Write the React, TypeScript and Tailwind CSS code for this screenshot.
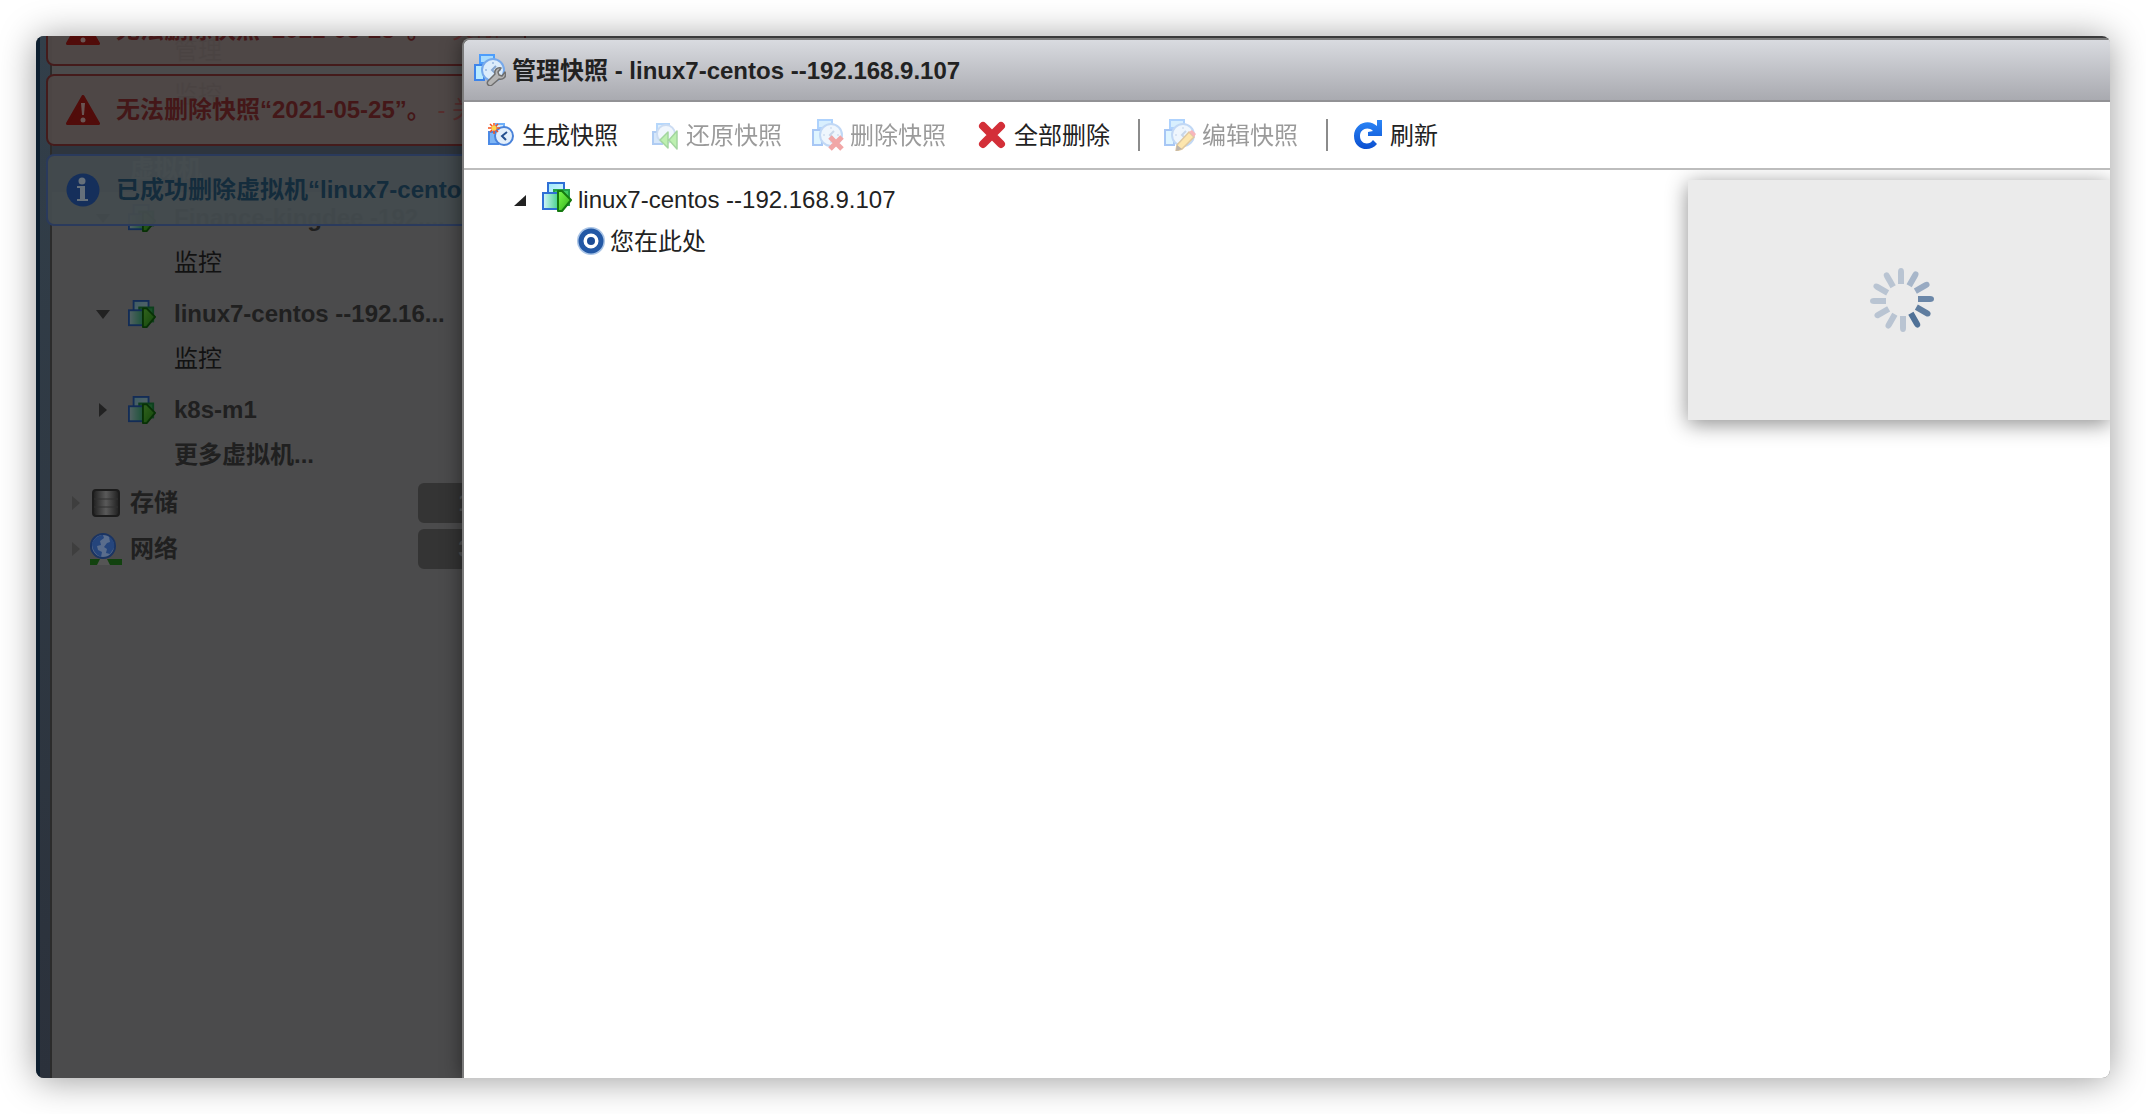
import type { ReactNode } from "react";

function VmIcon({ size = 30 }: { size?: number }) {
  return (
    <svg width={size} height={size} viewBox="0 0 30 30" aria-hidden="true">
      <defs>
        <linearGradient id="vmBack" x1="0" y1="0" x2="1" y2="1">
          <stop offset="0" stopColor="#9be8fb" />
          <stop offset="1" stopColor="#e4f9ff" />
        </linearGradient>
        <linearGradient id="vmPlay" x1="0" y1="0" x2="1" y2="1">
          <stop offset="0" stopColor="#7dfa4a" />
          <stop offset="1" stopColor="#2fae1b" />
        </linearGradient>
        <linearGradient id="vmFront" x1="0" y1="0" x2="1" y2="0">
          <stop offset="0" stopColor="#d3f5fd" />
          <stop offset="1" stopColor="#3fcf86" />
        </linearGradient>
      </defs>
      <rect x="6" y="1" width="16" height="16" fill="url(#vmBack)" stroke="#2f6fd6" strokeWidth="2" />
      <rect x="12" y="8" width="15" height="15" fill="#3ecb62" stroke="#23a04a" strokeWidth="2" />
      <rect x="1" y="11" width="16" height="16" fill="url(#vmFront)" stroke="#2f6fd6" strokeWidth="2" />
      <path d="M16 9h4l9 9-9 11h-4z" fill="url(#vmPlay)" stroke="#157a10" strokeWidth="2" strokeLinejoin="round" />
    </svg>
  );
}

// stacked squares with a clock face, shared by all snapshot icons
function SnapshotIcon({ children }: { children?: ReactNode }) {
  return (
    <svg width="32" height="32" viewBox="0 0 32 32" className="shrink-0" aria-hidden="true">
      <path d="M6 1h14v8H6z" fill="#a9dcfd" stroke="#4d9dfb" strokeWidth="2" />
      <path d="M1 11h9v15H1z" fill="#b9ebff" stroke="#3d84ea" strokeWidth="2" />
      <circle cx="19" cy="16" r="11" fill="#dcecfb" stroke="#77a9ea" strokeWidth="2" />
      <path d="M19 8v2M19 22v2M11 16h2M25 16h2" stroke="#a9c4e6" strokeWidth="2" />
      <path d="M22 12l-4 4 3 3" fill="none" stroke="#86a6d0" strokeWidth="2" />
      {children}
    </svg>
  );
}

function ManageIcon() {
  return (
    <SnapshotIcon>
      <path
        d="M14 27l7-7c-1-4 2-7 6-6l-3 4 1 3 3 1 3-4c2 5-2 8-6 7l-7 6c-3 2-6-1-4-4z"
        fill="#b5b5b5"
        stroke="#6f6f6f"
        strokeWidth="1.500"
        strokeLinejoin="round"
      />
    </SnapshotIcon>
  );
}

function CreateIcon() {
  return (
    <svg width="32" height="32" viewBox="0 0 32 32" className="shrink-0" aria-hidden="true">
      <path d="M12 5h8v8h-8z" fill="#d6ecfd" stroke="#6fb0fa" strokeWidth="2" />
      <path d="M5 13h9v12H5z" fill="#7fb6f5" stroke="#4b8ae6" strokeWidth="2" />
      <circle cx="20" cy="17" r="9" fill="#e3effb" stroke="#4a83da" strokeWidth="2" />
      <path d="M23 13l-5 4 4 4" fill="none" stroke="#25508f" strokeWidth="2" />
      <path d="M10 4v11M4 9h12M6 5l8 8M14 5l-8 8" stroke="#f4511e" strokeWidth="1.500" />
      <circle cx="10" cy="9" r="2.500" fill="#ffd54a" />
    </svg>
  );
}

function RevertIcon() {
  return (
    <svg width="32" height="32" viewBox="0 0 32 32" className="shrink-0" aria-hidden="true">
      <path d="M9 5h12v8H9z" fill="#b8dcfb" stroke="#5fa8f8" strokeWidth="2" />
      <path d="M5 13h9v12H5z" fill="#a6ccf5" stroke="#4f8fe6" strokeWidth="2" />
      <circle cx="18" cy="15" r="9" fill="#e0edfb" stroke="#8fb3e4" strokeWidth="2" />
      <path d="M20 13v16l-8-8zM29 12v18l-8-9z" fill="#6ee052" stroke="#35a32c" strokeWidth="1.500" strokeLinejoin="round" />
    </svg>
  );
}

function DeleteIcon() {
  return (
    <SnapshotIcon>
      <path d="M18 18l12 12M30 18L18 30" stroke="#e23b3b" strokeWidth="5" />
    </SnapshotIcon>
  );
}

function EditIcon() {
  return (
    <SnapshotIcon>
      <path d="M13 26L25 13l5 5-12 12-6 2z" fill="#fbc94c" stroke="#b9872c" strokeWidth="1.500" />
      <path d="M25 13l3-2 4 4-2 3z" fill="#f0606a" />
      <path d="M13 26l5 4-6 2z" fill="#6d5a4a" />
    </SnapshotIcon>
  );
}

function DeleteAllIcon() {
  return (
    <svg width="32" height="32" viewBox="0 0 32 32" className="shrink-0" aria-hidden="true">
      <path d="M7 7l18 18M25 7L7 25" stroke="#d32f38" strokeWidth="8" strokeLinecap="round" />
    </svg>
  );
}

function RefreshIcon() {
  return (
    <svg width="32" height="32" viewBox="0 0 32 32" className="shrink-0" aria-hidden="true">
      <defs>
        <linearGradient id="refreshBlue" x1="0" y1="0" x2="0" y2="1">
          <stop offset="0" stopColor="#2b86f7" />
          <stop offset="1" stopColor="#0b4fd0" />
        </linearGradient>
      </defs>
      <path
        d="M25 1h5v16H16v-4l5-1c-5-5-13-2-13 5 0 8 9 10 13 4l4 4C18 34 2 31 2 17 2 4 17-1 25 7z"
        fill="url(#refreshBlue)"
      />
    </svg>
  );
}

function HereIcon() {
  return (
    <svg width="30" height="30" viewBox="0 0 30 30" className="shrink-0" aria-hidden="true">
      <circle cx="15" cy="15" r="14" fill="#a9c4e6" />
      <circle cx="15" cy="15" r="10" fill="#fff" stroke="#2358a5" strokeWidth="5" />
      <circle cx="15" cy="15" r="4" fill="#1c4c96" />
    </svg>
  );
}

function StorageIcon() {
  return (
    <svg width="28" height="28" viewBox="0 0 28 28" aria-hidden="true">
      <defs>
        <linearGradient id="disk">
          <stop offset="0" stopColor="#1f1f1f" />
          <stop offset="0.500" stopColor="#5a5a5a" />
          <stop offset="1" stopColor="#1f1f1f" />
        </linearGradient>
      </defs>
      <rect x="1" y="1" width="26" height="26" rx="3" fill="url(#disk)" stroke="#1c1c1c" strokeWidth="2" />
      <path d="M2 10h24M2 18h24" stroke="#303030" />
    </svg>
  );
}

function NetworkIcon() {
  return (
    <svg width="32" height="32" viewBox="0 0 32 32" aria-hidden="true">
      <path d="M0 26h32v6H0z" fill="#12420f" />
      <path d="M7 32l3-6h7l3 6z" fill="#555" />
      <circle cx="13" cy="13" r="12" fill="#5a6d8c" stroke="#1b3462" strokeWidth="2" />
      <path d="M2 10c3-6 8-8 11-8l1 3-4 3 1 4-4 1 1 4 4 2-1 5c-5-2-9-7-9-14zM19 4c4 2 6 6 5 11l-4 6-4-1 1-4-3-2 3-4 3-1z" fill="#25457c" />
    </svg>
  );
}

function WarningIcon() {
  return (
    <svg width="34" height="30" viewBox="0 0 34 30" className="shrink-0" aria-hidden="true">
      <path d="M17 1.500L32.500 28.500h-31z" fill="#510c0a" stroke="#510c0a" strokeWidth="3" strokeLinejoin="round" />
      <path d="M15 8h4l-1 12h-2z" fill="#6a5553" />
      <circle cx="17" cy="25" r="2.500" fill="#6a5553" />
    </svg>
  );
}

function InfoIcon() {
  return (
    <svg width="34" height="34" viewBox="0 0 34 34" className="shrink-0" aria-hidden="true">
      <circle cx="17" cy="17" r="16.500" fill="#152f5b" />
      <circle cx="16" cy="8" r="3.500" fill="#66707a" />
      <path d="M11 13h8v13h3v2H11v-2h3V15h-3z" fill="#66707a" />
    </svg>
  );
}

function Spinner() {
  const colors = [
    "#b9c4d2", "#a8b7ca", "#98aac2", "#6b87a8", "#5f7d9f", "#4f7197",
    "#b9c4d2", "#b9c4d2", "#b9c4d2", "#b9c4d2", "#b9c4d2", "#b9c4d2",
  ];
  return (
    <svg width="64" height="64" viewBox="0 0 64 64" role="img" aria-label="loading">
      {colors.map((color, i) => (
        <path key={i} d="M28 16V4q0-4 3-4t3 4v12z" fill={color} transform={`rotate(${i * 30} 32 32)`} />
      ))}
    </svg>
  );
}

function Caret({ open, faint }: { open?: boolean; faint?: boolean }) {
  return (
    <svg width="16" height="16" viewBox="0 0 16 16" className="shrink-0" aria-hidden="true">
      <path d={open ? "M1 4h14l-7 9z" : "M4 1v14l8-7z"} fill={faint ? "#3e3e3e" : "#222"} />
    </svg>
  );
}

type AlertProps = { kind: "error" | "info"; text: string; note?: string };

function Alert({ kind, text, note }: AlertProps) {
  const error = kind === "error";
  return (
    <div
      className={`flex h-[72px] items-center gap-4 whitespace-nowrap rounded-lg border-2 pl-[18px] ${
        error ? "border-[#441b1b] bg-[#4e4746]/95 text-[#441718]" : "border-[#2a3a5c] bg-[#434b4e]/95 text-[#142c3c]"
      }`}
    >
      {error ? <WarningIcon /> : <InfoIcon />}
      <p>
        <strong>{text}</strong>
        {note && <span className="text-[#582e2e]">{note}</span>}
      </p>
    </div>
  );
}

function SubItem({ label }: { label: string }) {
  return (
    <li className="mb-1.5 flex h-[38px] items-center pl-[122px] text-[#121212]">{label}</li>
  );
}

function VmItem({ label, open }: { label: string; open?: boolean }) {
  return (
    <li className="flex h-[52px] items-center pl-[43px] font-bold">
      <Caret open={open} />
      <span className="ml-[17px] mr-[18px] brightness-[0.4]">
        <VmIcon size={28} />
      </span>
      {label}
    </li>
  );
}

function GroupItem({ icon, label, count }: { icon: ReactNode; label: string; count: number }) {
  return (
    <li className="flex h-[46px] items-center pl-4 font-bold">
      <Caret faint />
      <span className="ml-1.5 flex w-8 justify-center">{icon}</span>
      <span className="ml-2">{label}</span>
      <span className="ml-auto h-10 w-[94px] rounded-md bg-[#343434] text-center leading-10 text-[#505050]">
        {count}
      </span>
    </li>
  );
}

function ToolButton({ icon, label, disabled }: { icon: ReactNode; label: string; disabled?: boolean }) {
  return (
    <button
      type="button"
      disabled={disabled}
      className="mr-[30px] flex shrink-0 items-center gap-1.5 text-[#222] disabled:opacity-45"
    >
      {icon}
      <span className="pt-0.5">{label}</span>
    </button>
  );
}

function Separator() {
  return <span className="-ml-0.5 mr-6 h-8 w-0.5 shrink-0 bg-[#8b8b8b]" />;
}

export default function App() {
  return (
    <div className="h-screen bg-white p-9 font-['Liberation_Sans','Noto_Sans_CJK_SC',sans-serif] text-2xl leading-8">
      <div className="h-full rounded-lg shadow-[0_2px_36px_rgba(0,0,0,0.4)]">
        <div className="relative flex h-full overflow-hidden rounded-lg bg-[#4b4b4c]">
          <div className="w-4 shrink-0 border-l-4 border-r-2 border-l-[#0d1f30] border-r-[#2b2b2b] bg-linear-to-b from-[#323f4a] to-[#2b313b]" />

          <nav className="-mt-1 w-[460px] shrink-0 text-[#202020]">
            <ul>
              <SubItem label="管理" />
              <SubItem label="监控" />
              <li className="mt-8 flex h-[46px] items-center bg-[#2e353e] pl-[78px] font-bold text-[#5f656b]">
                虚拟机
              </li>
              <VmItem label="Finance-kingdee -192...." open />
              <SubItem label="监控" />
              <VmItem label="linux7-centos --192.16..." open />
              <SubItem label="监控" />
              <VmItem label="k8s-m1" />
              <li className="mb-1.5 flex h-[38px] items-center pl-[122px] font-bold">更多虚拟机...</li>
              <GroupItem icon={<StorageIcon />} label="存储" count={1} />
              <GroupItem icon={<NetworkIcon />} label="网络" count={3} />
            </ul>
          </nav>

          <div className="absolute -top-[42px] left-2.5 flex w-[480px] flex-col gap-2">
            <Alert kind="error" text="无法删除快照“2021-05-25”。" note=" - 关闭" />
            <Alert kind="error" text="无法删除快照“2021-05-25”。" note=" - 关闭" />
            <Alert kind="info" text="已成功删除虚拟机“linux7-centos" />
          </div>

          <section
            role="dialog"
            aria-labelledby="dialog-title"
            className="absolute bottom-0 left-[426px] right-0 top-0.5 flex flex-col rounded-tl-lg border-l-2 border-t-2 border-[#7b7b7b] bg-white shadow-[0_0_20px_rgba(0,0,0,0.5)]"
          >
            <header className="flex h-[62px] items-center gap-1.5 rounded-tl-md border-b-2 border-[#929295] bg-linear-to-b from-[#d9dbe0] to-[#a9aab0] pl-2.5">
              <ManageIcon />
              <h1 id="dialog-title" className="pt-0.5 font-bold text-[#222]">
                管理快照 - linux7-centos --192.168.9.107
              </h1>
            </header>

            <div className="flex h-[68px] items-center border-b-2 border-[#bdbdbd] pl-5">
              <ToolButton icon={<CreateIcon />} label="生成快照" />
              <ToolButton icon={<RevertIcon />} label="还原快照" disabled />
              <ToolButton icon={<DeleteIcon />} label="删除快照" disabled />
              <ToolButton icon={<DeleteAllIcon />} label="全部删除" />
              <Separator />
              <ToolButton icon={<EditIcon />} label="编辑快照" disabled />
              <Separator />
              <ToolButton icon={<RefreshIcon />} label="刷新" />
            </div>

            <div className="flex min-h-0 flex-1 items-start justify-between overflow-hidden pt-2.5">
              <ul className="pl-12 text-[#222]">
                <li>
                  <div className="flex h-10 items-center gap-1.5">
                    <svg width="16" height="16" viewBox="0 0 16 16" className="mr-2" aria-hidden="true">
                      <path d="M14 3v11H2z" fill="#222" />
                    </svg>
                    <span className="pb-1.5">
                      <VmIcon />
                    </span>
                    linux7-centos --192.168.9.107
                  </div>
                  <ul>
                    <li className="flex h-[42px] items-center gap-1 pl-16">
                      <HereIcon />
                      <span className="pt-0.5">您在此处</span>
                    </li>
                  </ul>
                </li>
              </ul>
              <div className="flex h-60 w-[422px] items-center justify-center bg-[#ebebeb] pl-1.5 shadow-[0_4px_20px_rgba(0,0,0,0.45)]">
                <Spinner />
              </div>
            </div>
          </section>
        </div>
      </div>
    </div>
  );
}
